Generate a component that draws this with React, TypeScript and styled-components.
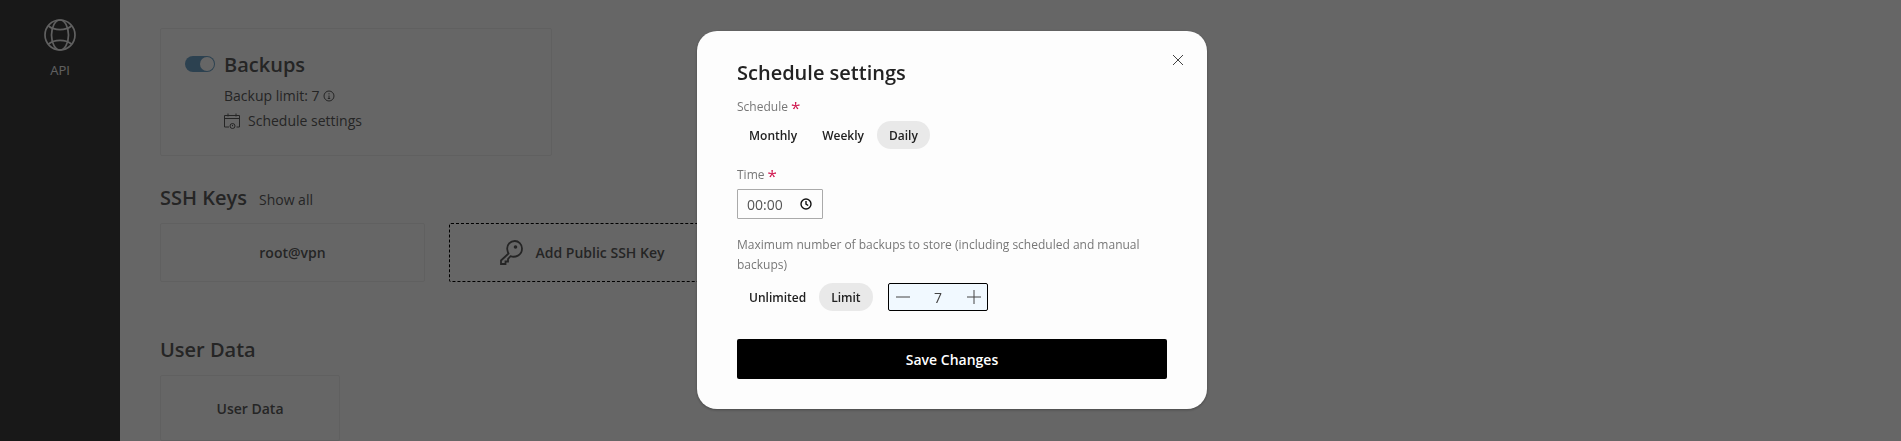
import styled, { createGlobalStyle } from "styled-components";
import { FC, ReactNode } from "react";

const GlobalStyle = createGlobalStyle`
	html, body {
		margin: 0;
		padding: 0;
		height: 100%;
		overflow: hidden;
		background: #fff;
		font-family: "Open Sans", "Liberation Sans", sans-serif;
	}
`;

const Page = styled.div`
	display: flex;
	height: 441px;
	overflow: hidden;
`;

const Sidebar = styled.nav`
	flex: 0 0 120px;
	background-color: #3c3c3c;
	color: #f0f0f0;
	display: flex;
	flex-direction: column;
	align-items: center;
	padding-top: 19px;
	box-sizing: border-box;
`;

const SidebarLabel = styled.span`
	margin-top: 10px;
	font-size: 13px;
	line-height: 18px;
`;

const Main = styled.main`
	flex: 1;
	padding: 28px 40px 0;
	color: #5c5c5c;
`;

const Card = styled.div<{ $w: number; $h: number }>`
	width: ${(p) => p.$w}px;
	height: ${(p) => p.$h}px;
	box-sizing: border-box;
	border: 1px solid #f0f0f0;
	border-radius: 2px;
	background: #fff;
	display: flex;
	align-items: center;
	justify-content: center;
	font-size: 14px;
	font-weight: 600;
`;

const BackupCard = styled(Card)`
	align-items: flex-start;
	justify-content: flex-start;
	gap: 9px;
	padding: 27px 24px;
`;

const Toggle = styled.div`
	width: 30px;
	height: 16px;
	border-radius: 8px;
	background: #6fa3c8;
	position: relative;
	flex: none;
`;

const ToggleKnob = styled.div`
	position: absolute;
	right: 1px;
	top: 1px;
	width: 14px;
	height: 14px;
	border-radius: 50%;
	background: #fff;
`;

const BackupBody = styled.div`
	display: flex;
	flex-direction: column;
	margin-top: -5px;
`;

const BackupTitle = styled.h3`
	margin: 0 0 8px;
	font-size: 20px;
	font-weight: 600;
	line-height: 27px;
`;

const BackupLine = styled.div`
	display: flex;
	align-items: center;
	font-size: 14px;
	font-weight: 400;
	line-height: 19px;
	margin-bottom: 6px;
`;

const SectionRow = styled.div<{ $top: number }>`
	display: flex;
	align-items: baseline;
	gap: 12px;
	margin-top: ${(p) => p.$top}px;
	height: 27px;
`;

const SectionTitle = styled.h3`
	margin: 0;
	font-size: 20px;
	font-weight: 600;
	line-height: 27px;
`;

const ShowAll = styled.span`
	font-size: 14px;
`;

const CardRow = styled.div<{ $top: number }>`
	display: flex;
	gap: 24px;
	margin-top: ${(p) => p.$top}px;
`;

const AddCard = styled(Card)`
	border: 1px dashed #000;
	gap: 12px;
`;

const Overlay = styled.div`
	position: fixed;
	inset: 0;
	background: rgba(0, 0, 0, 0.6);
	display: flex;
	align-items: center;
	justify-content: center;
	padding: 0 0 1px 3px;
`;

const Modal = styled.div`
	position: relative;
	width: 510px;
	height: 378px;
	box-sizing: border-box;
	padding: 27px 40px 30px;
	background: #fdfdfd;
	border-radius: 20px;
	box-shadow: 0 1px 3px rgba(0, 0, 0, 0.3);
	display: flex;
	flex-direction: column;
	color: #222;
`;

const CloseButton = styled.button`
	position: absolute;
	top: 22px;
	right: 22px;
	width: 14px;
	height: 14px;
	padding: 0;
	border: 0;
	background: none;
	display: flex;
`;

const ModalTitle = styled.h2`
	margin: 0;
	font-size: 20px;
	font-weight: 600;
	line-height: 30px;
`;

const Label = styled.label`
	font-size: 12px;
	line-height: 20px;
	color: #777;
	display: block;
`;

const Star = styled.span`
	color: #d0174f;
	font-size: 17px;
	line-height: 12px;
	vertical-align: -3px;
	margin-left: 3px;
`;

const Pills = styled.div`
	display: flex;
	align-items: center;
	gap: 1px;
`;

const Pill = styled.div<{ $active?: boolean }>`
	height: 28px;
	padding: 0 12px;
	border-radius: 14px;
	display: flex;
	align-items: center;
	font-size: 12px;
	font-weight: 600;
	background: ${(p) => (p.$active ? "#e9e9e9" : "transparent")};
`;

const TimeBox = styled.div`
	width: 86px;
	height: 30px;
	box-sizing: border-box;
	border: 1px solid #aaa;
	border-radius: 1px;
	display: flex;
	align-items: center;
	justify-content: space-between;
	padding: 0 10px 0 9px;
	font-size: 14px;
	color: #555;
`;

const Stepper = styled.div`
	width: 100px;
	height: 28px;
	box-sizing: border-box;
	margin-left: 14px;
	border: 1px solid #000;
	border-radius: 2px;
	background: #f1f9ff;
	display: flex;
	align-items: center;
	justify-content: space-between;
	padding: 0 6px 0 7px;
	font-size: 14px;
	color: #444;
`;

const SaveButton = styled.button`
	height: 40px;
	margin-top: 28px;
	border: 0;
	border-radius: 2px;
	background: #000;
	color: #fff;
	font-family: inherit;
	font-size: 14px;
	font-weight: 600;
`;

const Field = styled.div<{ $top: number; $gap: number }>`
	margin-top: ${(p) => p.$top}px;
	display: flex;
	flex-direction: column;
	gap: ${(p) => p.$gap}px;
`;

const LineIcon: FC<{ size: number; sw?: number; children: ReactNode }> = ({ size, sw = 1, children }) => (
	<svg width={size} height={size} viewBox={`0 0 ${size} ${size}`} fill="none" stroke="currentColor" strokeWidth={sw}>
		{children}
	</svg>
);

const GlobeIcon = () => (
	<LineIcon size={32} sw={1.7}>
		<circle cx="16" cy="16" r="15" />
		<ellipse cx="16" cy="16" rx="8.5" ry="15" />
		<path d="M4.5 7c3 2.4 7 3.6 11.5 3.6S24.500 9.400 27.500 7M4.500 25c3-2.400 7-3.600 11.500-3.600S24.500 22.600 27.500 25" />
	</LineIcon>
);

const InfoIcon = () => (
	<svg width="12" height="12" viewBox="0 0 12 12" fill="none" stroke="currentColor" style={{ marginLeft: 3 }}>
		<circle cx="6" cy="6" r="5" />
		<path d="M6 5.500v3M4.800 8.500h2.400M6 3.200v1.200" />
	</svg>
);

const CalendarIcon = () => (
	<svg width="16" height="16" viewBox="0 0 16 16" fill="none" stroke="currentColor" style={{ marginRight: 8 }}>
		<path d="M5 14H.5V2.500h15V14h-3M.5 5.500h15M4 .5v3M12 .5v3" />
		<circle cx="8.500" cy="13" r="2.500" />
		<path d="M8.500 11.800v1.400" />
	</svg>
);

const KeyIcon = () => (
	<svg width="25" height="25" viewBox="0 0 25 25" fill="none" stroke="currentColor" strokeWidth="1.8">
		<path d="M9.500 13.500 2 20.500V24h4.500v-2.500H9V19l2.500-2.800c4.500 1.600 11.500-.6 11.500-7.700C23 4 19.500 1 15.800 1 11.500 1 7.600 4.500 8.300 9.500c.1 1.200.5 2.600 1.200 4z" />
		<circle cx="16.500" cy="7" r="1.800" fill="currentColor" stroke="none" />
	</svg>
);

const ClockIcon = () => (
	<svg width="12" height="12" viewBox="0 0 12 12" fill="none" stroke="#111" strokeWidth="1.400">
		<circle cx="6" cy="6" r="5" />
		<path d="M6 3v3.200l2.200 1.300" />
	</svg>
);

const CloseIcon = () => (
	<LineIcon size={14}>
		<path d="M2 2l10 10M12 2L2 12" stroke="#444" />
	</LineIcon>
);

const MinusIcon = () => (
	<LineIcon size={14}>
		<path d="M0 7h14" />
	</LineIcon>
);

const PlusIcon = () => (
	<LineIcon size={14}>
		<path d="M0 7h14M7 0v14" />
	</LineIcon>
);

export default function App() {
	return (
		<>
			<GlobalStyle />
			<Page>
				<Sidebar>
					<GlobeIcon />
					<SidebarLabel>API</SidebarLabel>
				</Sidebar>
				<Main>
					<BackupCard $w={392} $h={128}>
						<Toggle>
							<ToggleKnob />
						</Toggle>
						<BackupBody>
							<BackupTitle>Backups</BackupTitle>
							<BackupLine>
								Backup limit: 7
								<InfoIcon />
							</BackupLine>
							<BackupLine>
								<CalendarIcon />
								Schedule settings
							</BackupLine>
						</BackupBody>
					</BackupCard>
					<SectionRow $top={28}>
						<SectionTitle>SSH Keys</SectionTitle>
						<ShowAll>Show all</ShowAll>
					</SectionRow>
					<CardRow $top={12}>
						<Card $w={265} $h={59}>root@vpn</Card>
						<AddCard $w={265} $h={59}>
							<KeyIcon />
							Add Public SSH Key
						</AddCard>
					</CardRow>
					<SectionRow $top={54}>
						<SectionTitle>User Data</SectionTitle>
					</SectionRow>
					<CardRow $top={12}>
						<Card $w={180} $h={66}>User Data</Card>
					</CardRow>
				</Main>
			</Page>
			<Overlay>
				<Modal>
					<CloseButton>
						<CloseIcon />
					</CloseButton>
					<ModalTitle>Schedule settings</ModalTitle>
					<Field $top={9} $gap={4}>
						<Label>
							Schedule<Star>*</Star>
						</Label>
						<Pills>
							<Pill>Monthly</Pill>
							<Pill>Weekly</Pill>
							<Pill $active>Daily</Pill>
						</Pills>
					</Field>
					<Field $top={16} $gap={4}>
						<Label>
							Time<Star>*</Star>
						</Label>
						<TimeBox>
							00:00
							<ClockIcon />
						</TimeBox>
					</Field>
					<Field $top={16} $gap={8}>
						<Label>Maximum number of backups to store (including scheduled and manual backups)</Label>
						<Pills>
							<Pill>Unlimited</Pill>
							<Pill $active>Limit</Pill>
							<Stepper>
								<MinusIcon />7<PlusIcon />
							</Stepper>
						</Pills>
					</Field>
					<SaveButton>Save Changes</SaveButton>
				</Modal>
			</Overlay>
		</>
	);
}
